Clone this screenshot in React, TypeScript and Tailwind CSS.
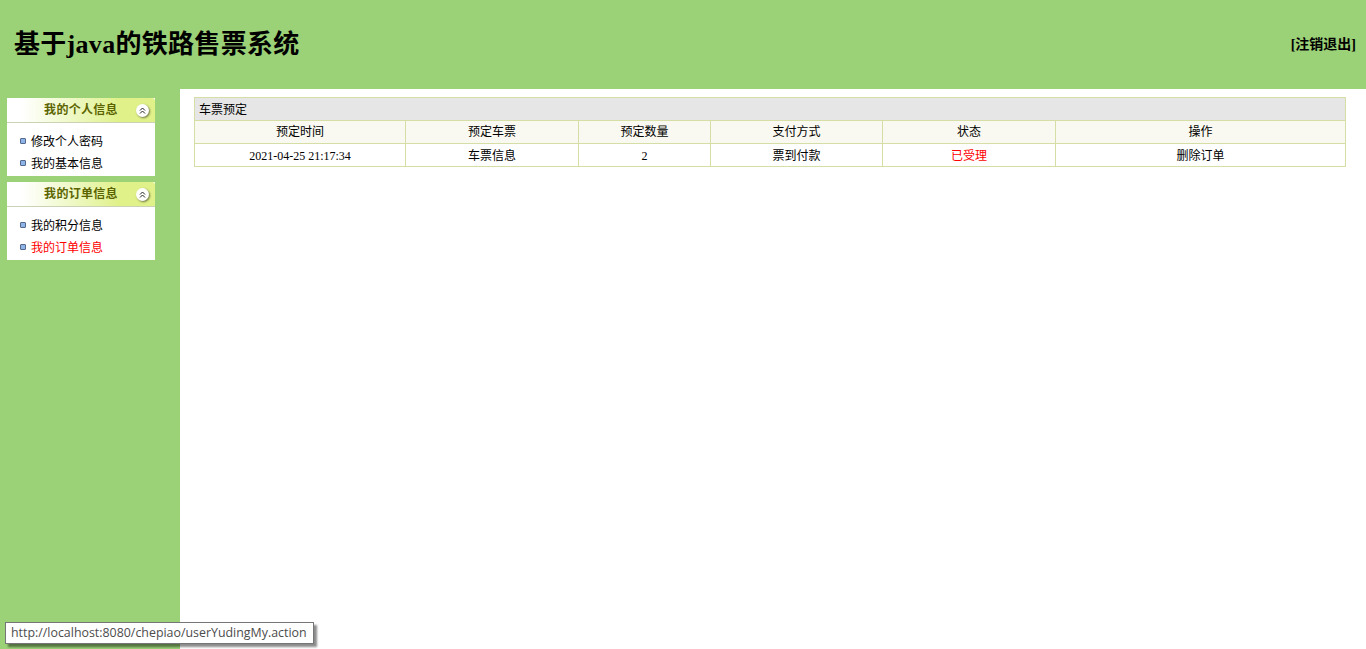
const serif = "font-['Liberation_Serif','Noto_Sans_CJK_SC',serif]";

const menus = [
  { title: '我的个人信息', items: [{ label: '修改个人密码' }, { label: '我的基本信息' }] },
  { title: '我的订单信息', items: [{ label: '我的积分信息' }, { label: '我的订单信息', active: true }] },
];

const columns = [
  { label: '预定时间', width: 'w-[211px]' },
  { label: '预定车票', width: 'w-[173px]' },
  { label: '预定数量', width: 'w-[132px]' },
  { label: '支付方式', width: 'w-[172px]' },
  { label: '状态', width: 'w-[173px]' },
  { label: '操作', width: 'w-[290px]' },
];

function CollapseIcon() {
  return (
    <span className="w-[13px] h-[13px] rounded-full bg-white shadow-[1px_1px_2px_rgba(0,0,0,0.5)] flex items-center justify-center">
      <svg width="7" height="7" viewBox="0 0 7 7" fill="none" stroke="#222" strokeWidth="1">
        <path d="M1 3.5 3.5 1 6 3.5" />
        <path d="M1 6.5 3.5 4 6 6.5" />
      </svg>
    </span>
  );
}

function SideMenu({ title, items }: { title: string; items: { label: string; active?: boolean }[] }) {
  return (
    <div className="w-[148px] bg-white">
      <div className="h-[25px] rounded-t-[3px] border-b border-[#c9d2b4] bg-gradient-to-r from-white from-[10%] to-[#e0f18a] to-[75%] flex items-center">
        <h3 className="w-[129px] pl-[19px] text-center text-[12px] tracking-[0.3px] font-bold text-[#5c6400]">{title}</h3>
        <CollapseIcon />
      </div>
      <ul className="pt-[8px] pb-[1px]">
        {items.map((item) => (
          <li key={item.label} className="h-[22px] pl-[13px] flex items-center gap-[5px]">
            <span className="w-[6px] h-[6px] -mt-[2px] rounded-[1px] border border-[#56698a] bg-[#8db4e8]" />
            <a href="#" className={`text-[12px] ${item.active ? 'text-[#ff0000]' : 'text-black'}`}>
              {item.label}
            </a>
          </li>
        ))}
      </ul>
    </div>
  );
}

export default function App() {
  const cell = 'border border-[#d5dea5] h-[23px] p-0 text-center font-normal';

  return (
    <div className={`relative h-[649px] overflow-hidden bg-white text-black ${serif}`}>
      {/* Top banner */}
      <header className="h-[89px] bg-[#9bd177] flex items-center justify-between pl-[14px] pr-[10px]">
        <h1 className="text-[26px] tracking-[0.3px] font-bold leading-none">基于java的铁路售票系统</h1>
        <a href="#" className="text-[14px] font-bold">[注销退出]</a>
      </header>

      <div className="flex h-[560px]">
        {/* Left menu */}
        <aside className="w-[180px] shrink-0 bg-[#9bd177] pt-[9px] pl-[7px] flex flex-col gap-[6px]">
          {menus.map((menu) => (
            <SideMenu key={menu.title} title={menu.title} items={menu.items} />
          ))}
        </aside>

        {/* Order table */}
        <main className="flex-1 min-w-0 pt-[8px] pl-[14px] pr-[20px]">
          <table className="w-[1151px] table-fixed border-collapse text-[12px]">
            <colgroup>
              {columns.map((col) => (
                <col key={col.label} className={col.width} />
              ))}
            </colgroup>
            <thead>
              <tr>
                <th colSpan={6} className={`${cell} !text-left pl-[4px] pt-[1px] bg-[#e6e6e6]`}>车票预定</th>
              </tr>
              <tr>
                {columns.map((col) => (
                  <th key={col.label} className={`${cell} bg-[#f9f9f1]`}>{col.label}</th>
                ))}
              </tr>
            </thead>
            <tbody>
              <tr>
                <td className={`${cell} pt-[1px]`}>2021-04-25 21:17:34</td>
                <td className={`${cell} pt-[1px]`}><a href="#">车票信息</a></td>
                <td className={`${cell} pt-[1px]`}>2</td>
                <td className={`${cell} pt-[1px]`}>票到付款</td>
                <td className={`${cell} pt-[1px] text-[#ff0000]`}>已受理</td>
                <td className={`${cell} pt-[1px]`}><a href="#">删除订单</a></td>
              </tr>
            </tbody>
          </table>
        </main>
      </div>

      {/* Browser link tooltip */}
      <div className="absolute left-[5px] top-[622px] h-[22px] w-[309px] border border-[#767676] bg-white shadow-[3px_3px_2px_rgba(0,0,0,0.45)] flex items-center pl-[5px] font-['Open_Sans',sans-serif] text-[12.4px] text-[#4c4c4c]">
        http://localhost:8080/chepiao/userYudingMy.action
      </div>
    </div>
  );
}
